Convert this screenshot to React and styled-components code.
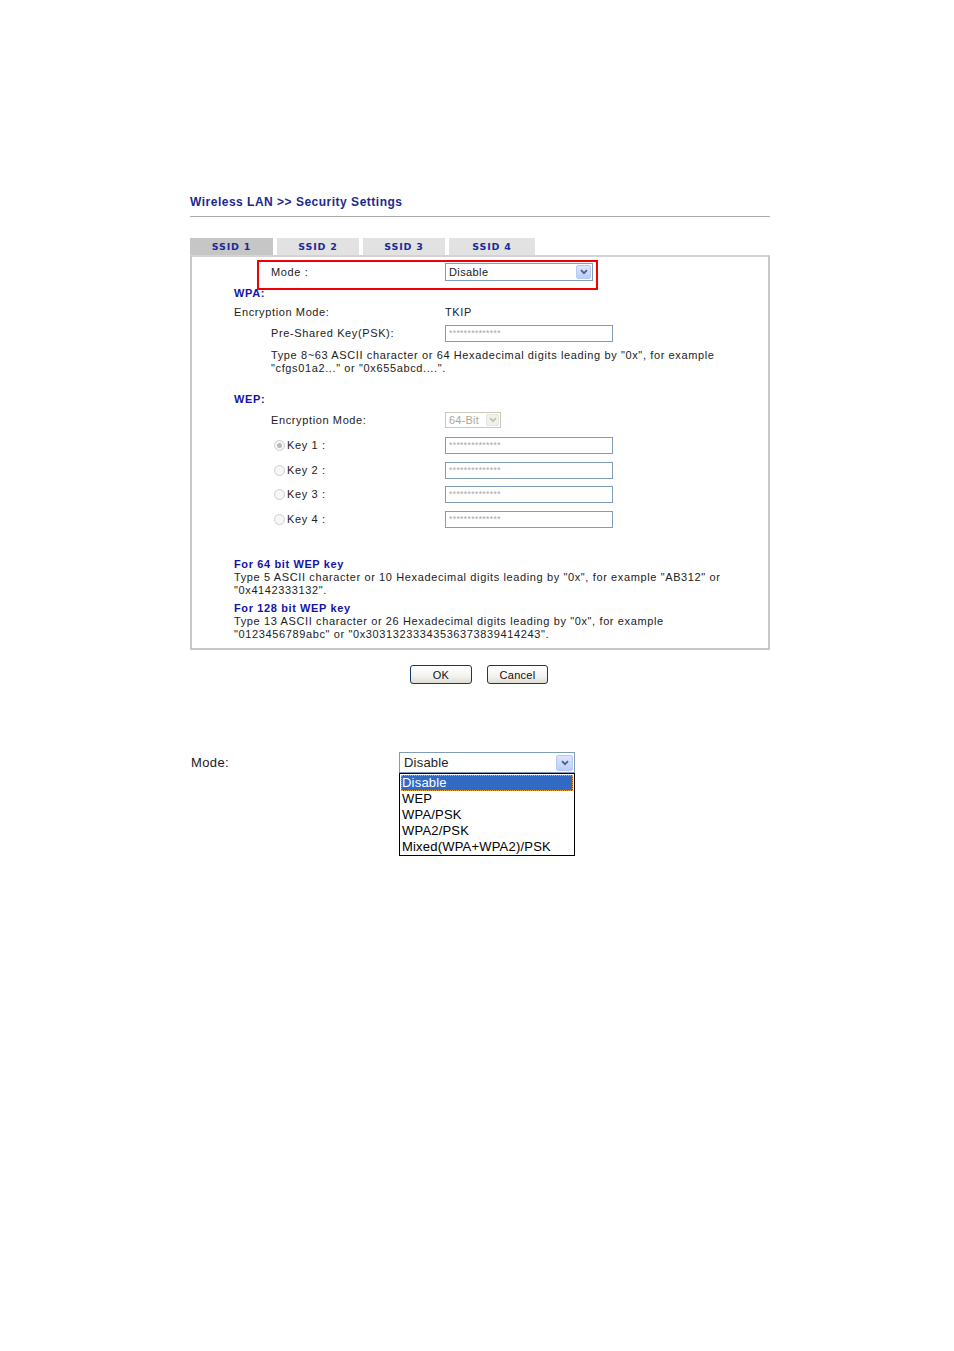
import React from 'react';
import styled, { createGlobalStyle } from 'styled-components';

const GlobalStyle = createGlobalStyle`
  body {
    margin: 0;
    background: #ffffff;
    font-family: "Liberation Sans", Arial, sans-serif;
  }
`;

const Page = styled.div`
  width: 580px;
  padding: 194px 0 0 190px;
`;

const Title = styled.div`
  height: 16px;
  line-height: 16px;
  font-size: 12px;
  font-weight: bold;
  letter-spacing: 0.5px;
  color: #1b2a8f;
`;

const Rule = styled.div`
  margin-top: 6px;
  border-top: 1px solid #aaaaaa;
`;

const Tabs = styled.div`
  display: flex;
  gap: 4px;
  margin-top: 21px;
  height: 17px;
`;

const Tab = styled.div`
  width: ${(p) => p.$w}px;
  display: flex;
  align-items: center;
  justify-content: center;
  background: ${(p) => (p.$active ? '#c6c6c6' : '#e2e2e2')};
  font-family: "DejaVu Sans", Verdana, sans-serif;
  font-size: 9.5px;
  font-weight: bold;
  letter-spacing: 0.8px;
  color: #1b2a9a;
`;

const Panel = styled.div`
  position: relative;
  border: 2px solid #c8c8c8;
  border-top-color: #d4d4d4;
  padding-bottom: 7px;
  font-size: 11px;
  letter-spacing: 0.62px;
  color: #222;
`;

const Highlight = styled.div`
  position: absolute;
  left: 65px;
  top: 3px;
  width: 337px;
  height: 26px;
  border: 2px solid #f00000;
  pointer-events: none;
`;

const Row = styled.div`
  display: flex;
  align-items: center;
  height: ${(p) => p.$h}px;
  margin-top: ${(p) => p.$mt || 0}px;
  padding-left: ${(p) => p.$indent}px;
`;

const Label = styled.div`
  width: ${(p) => p.$w}px;
  flex: none;
  display: flex;
  align-items: center;
`;

const Section = styled.div`
  font-weight: bold;
  color: #1414a8;
`;

const Note = styled.div`
  margin-top: ${(p) => p.$mt || 0}px;
  padding-left: ${(p) => p.$indent}px;
  padding-right: 20px;
  line-height: 13px;
`;

const NoteHead = styled.div`
  font-weight: bold;
  color: #1414a8;
`;

const SelectBox = styled.div`
  box-sizing: border-box;
  width: ${(p) => p.$w}px;
  height: ${(p) => p.$h}px;
  display: flex;
  align-items: center;
  justify-content: space-between;
  border: 1px solid ${(p) => (p.$disabled ? '#cbc8ba' : '#7f9db9')};
  background: #fff;
  color: ${(p) => (p.$disabled ? '#aca899' : '#222')};
  padding: 0 1px 0 ${(p) => p.$pad || 3}px;
  font-size: ${(p) => p.$fs || 11}px;
  letter-spacing: ${(p) => p.$ls ?? 0.4}px;
`;

const ArrowBtn = styled.div`
  width: ${(p) => p.$s}px;
  height: ${(p) => p.$s - 1}px;
  display: flex;
  align-items: center;
  justify-content: center;
  border-radius: 2px;
  background: ${(p) =>
    p.$disabled ? '#f1f0ea' : 'linear-gradient(180deg, #dbe6fd 0%, #bccdf8 100%)'};
  border: 1px solid ${(p) => (p.$disabled ? '#e6e4dc' : '#b8c9f3')};
  box-sizing: border-box;
`;

const TextInput = styled.div`
  box-sizing: border-box;
  width: 168px;
  height: 17px;
  border: 1px solid #7f9db9;
  padding: 0 3px;
  display: flex;
  align-items: center;
  font-size: 8.5px;
  letter-spacing: 0.4px;
  color: #a8a8a8;
`;

const Radio = styled.span`
  box-sizing: border-box;
  width: 11px;
  height: 11px;
  margin: 0 2px 0 3px;
  border-radius: 50%;
  border: 1px solid #cfcfcf;
  background: #f7f7f7;
  display: inline-flex;
  align-items: center;
  justify-content: center;
  &::after {
    content: '';
    width: 5px;
    height: 5px;
    border-radius: 50%;
    background: ${(p) => (p.$checked ? '#b9b9b9' : 'transparent')};
  }
`;

const Buttons = styled.div`
  display: flex;
  justify-content: center;
  gap: 15px;
  margin-top: 15px;
  padding-right: 2px;
`;

const Button = styled.div`
  box-sizing: border-box;
  width: ${(p) => p.$w}px;
  height: 19px;
  border: 1px solid #0f3a6e;
  border-radius: 3px;
  background: linear-gradient(180deg, #ffffff 0%, #f3f2ee 60%, #dedcd3 100%);
  display: flex;
  align-items: center;
  justify-content: center;
  font-size: 11px;
  letter-spacing: 0.3px;
  color: #111;
`;

const Demo = styled.div`
  display: flex;
  margin-top: 68px;
  padding-left: 1px;
  font-size: 13px;
  color: #1a1a1a;
`;

const DemoLabel = styled.div`
  width: 208px;
  height: 21px;
  display: flex;
  align-items: center;
  letter-spacing: 0.4px;
`;

const DemoSelect = styled.div`
  width: 176px;
`;

const List = styled.div`
  box-sizing: border-box;
  border: 1px solid #000;
  padding: 1px 1px 0 1px;
  height: 83px;
`;

const Option = styled.div`
  box-sizing: border-box;
  height: 16px;
  line-height: 16px;
  padding-left: 1px;
  letter-spacing: 0.2px;
  background: ${(p) => (p.$selected ? '#316ac5' : 'transparent')};
  color: ${(p) => (p.$selected ? '#fff' : '#000')};
  outline: ${(p) => (p.$selected ? '1px dotted #f0a030' : 'none')};
  outline-offset: -1px;
`;

function Chevron({ color }) {
  return (
    <svg width="8" height="6" viewBox="0 0 8 6">
      <path d="M1 1.2 L4 4.2 L7 1.2" fill="none" stroke={color} strokeWidth="1.8" />
    </svg>
  );
}

const stars = '**************';

const keys = [
  { n: 1, h: 22, checked: true },
  { n: 2, h: 28 },
  { n: 3, h: 20 },
  { n: 4, h: 30 },
];

const options = ['Disable', 'WEP', 'WPA/PSK', 'WPA2/PSK', 'Mixed(WPA+WPA2)/PSK'];

export default function App() {
  return (
    <Page>
      <GlobalStyle />
      <Title>Wireless LAN &gt;&gt; Security Settings</Title>
      <Rule />
      <Tabs>
        <Tab $w={83} $active>SSID 1</Tab>
        <Tab $w={82}>SSID 2</Tab>
        <Tab $w={82}>SSID 3</Tab>
        <Tab $w={86}>SSID 4</Tab>
      </Tabs>
      <Panel>
        <Highlight />
        <Row $h={30} $indent={79}>
          <Label $w={174}>Mode&nbsp;:</Label>
          <SelectBox $w={148} $h={18}>
            Disable
            <ArrowBtn $s={15}>
              <Chevron color="#4d6185" />
            </ArrowBtn>
          </SelectBox>
        </Row>
        <Row $h={12} $indent={42}>
          <Section>WPA:</Section>
        </Row>
        <Row $h={26} $indent={42}>
          <Label $w={211}>Encryption Mode:</Label>
          <span>TKIP</span>
        </Row>
        <Row $h={16} $indent={79}>
          <Label $w={174}>Pre-Shared Key(PSK):</Label>
          <TextInput>{stars}</TextInput>
        </Row>
        <Note $mt={8} $indent={79}>
          Type 8~63 ASCII character or 64 Hexadecimal digits leading by "0x", for example
          <br />
          "cfgs01a2..." or "0x655abcd....".
        </Note>
        <Row $h={14} $mt={17} $indent={42}>
          <Section>WEP:</Section>
        </Row>
        <Row $h={28} $indent={79}>
          <Label $w={174}>Encryption Mode:</Label>
          <SelectBox $w={56} $h={16} $disabled $ls={0.2}>
            64-Bit
            <ArrowBtn $s={13} $disabled>
              <Chevron color="#c5c3b8" />
            </ArrowBtn>
          </SelectBox>
        </Row>
        {keys.map((k) => (
          <Row key={k.n} $h={k.h} $indent={79}>
            <Label $w={174}>
              <Radio $checked={k.checked} />
              Key {k.n} :
            </Label>
            <TextInput>{stars}</TextInput>
          </Row>
        ))}
        <Note $mt={24} $indent={42}>
          <NoteHead>For 64 bit WEP key</NoteHead>
          Type 5 ASCII character or 10 Hexadecimal digits leading by "0x", for example "AB312" or
          <br />
          "0x4142333132".
        </Note>
        <Note $mt={5} $indent={42}>
          <NoteHead>For 128 bit WEP key</NoteHead>
          Type 13 ASCII character or 26 Hexadecimal digits leading by "0x", for example
          <br />
          "0123456789abc" or "0x30313233343536373839414243".
        </Note>
      </Panel>
      <Buttons>
        <Button $w={62}>OK</Button>
        <Button $w={61}>Cancel</Button>
      </Buttons>
      <Demo>
        <DemoLabel>Mode:</DemoLabel>
        <DemoSelect>
          <SelectBox $w={176} $h={21} $fs={13} $pad={4} $ls={0.2}>
            Disable
            <ArrowBtn $s={17}>
              <Chevron color="#4d6185" />
            </ArrowBtn>
          </SelectBox>
          <List>
            {options.map((o, i) => (
              <Option key={o} $selected={i === 0}>
                {o}
              </Option>
            ))}
          </List>
        </DemoSelect>
      </Demo>
    </Page>
  );
}
